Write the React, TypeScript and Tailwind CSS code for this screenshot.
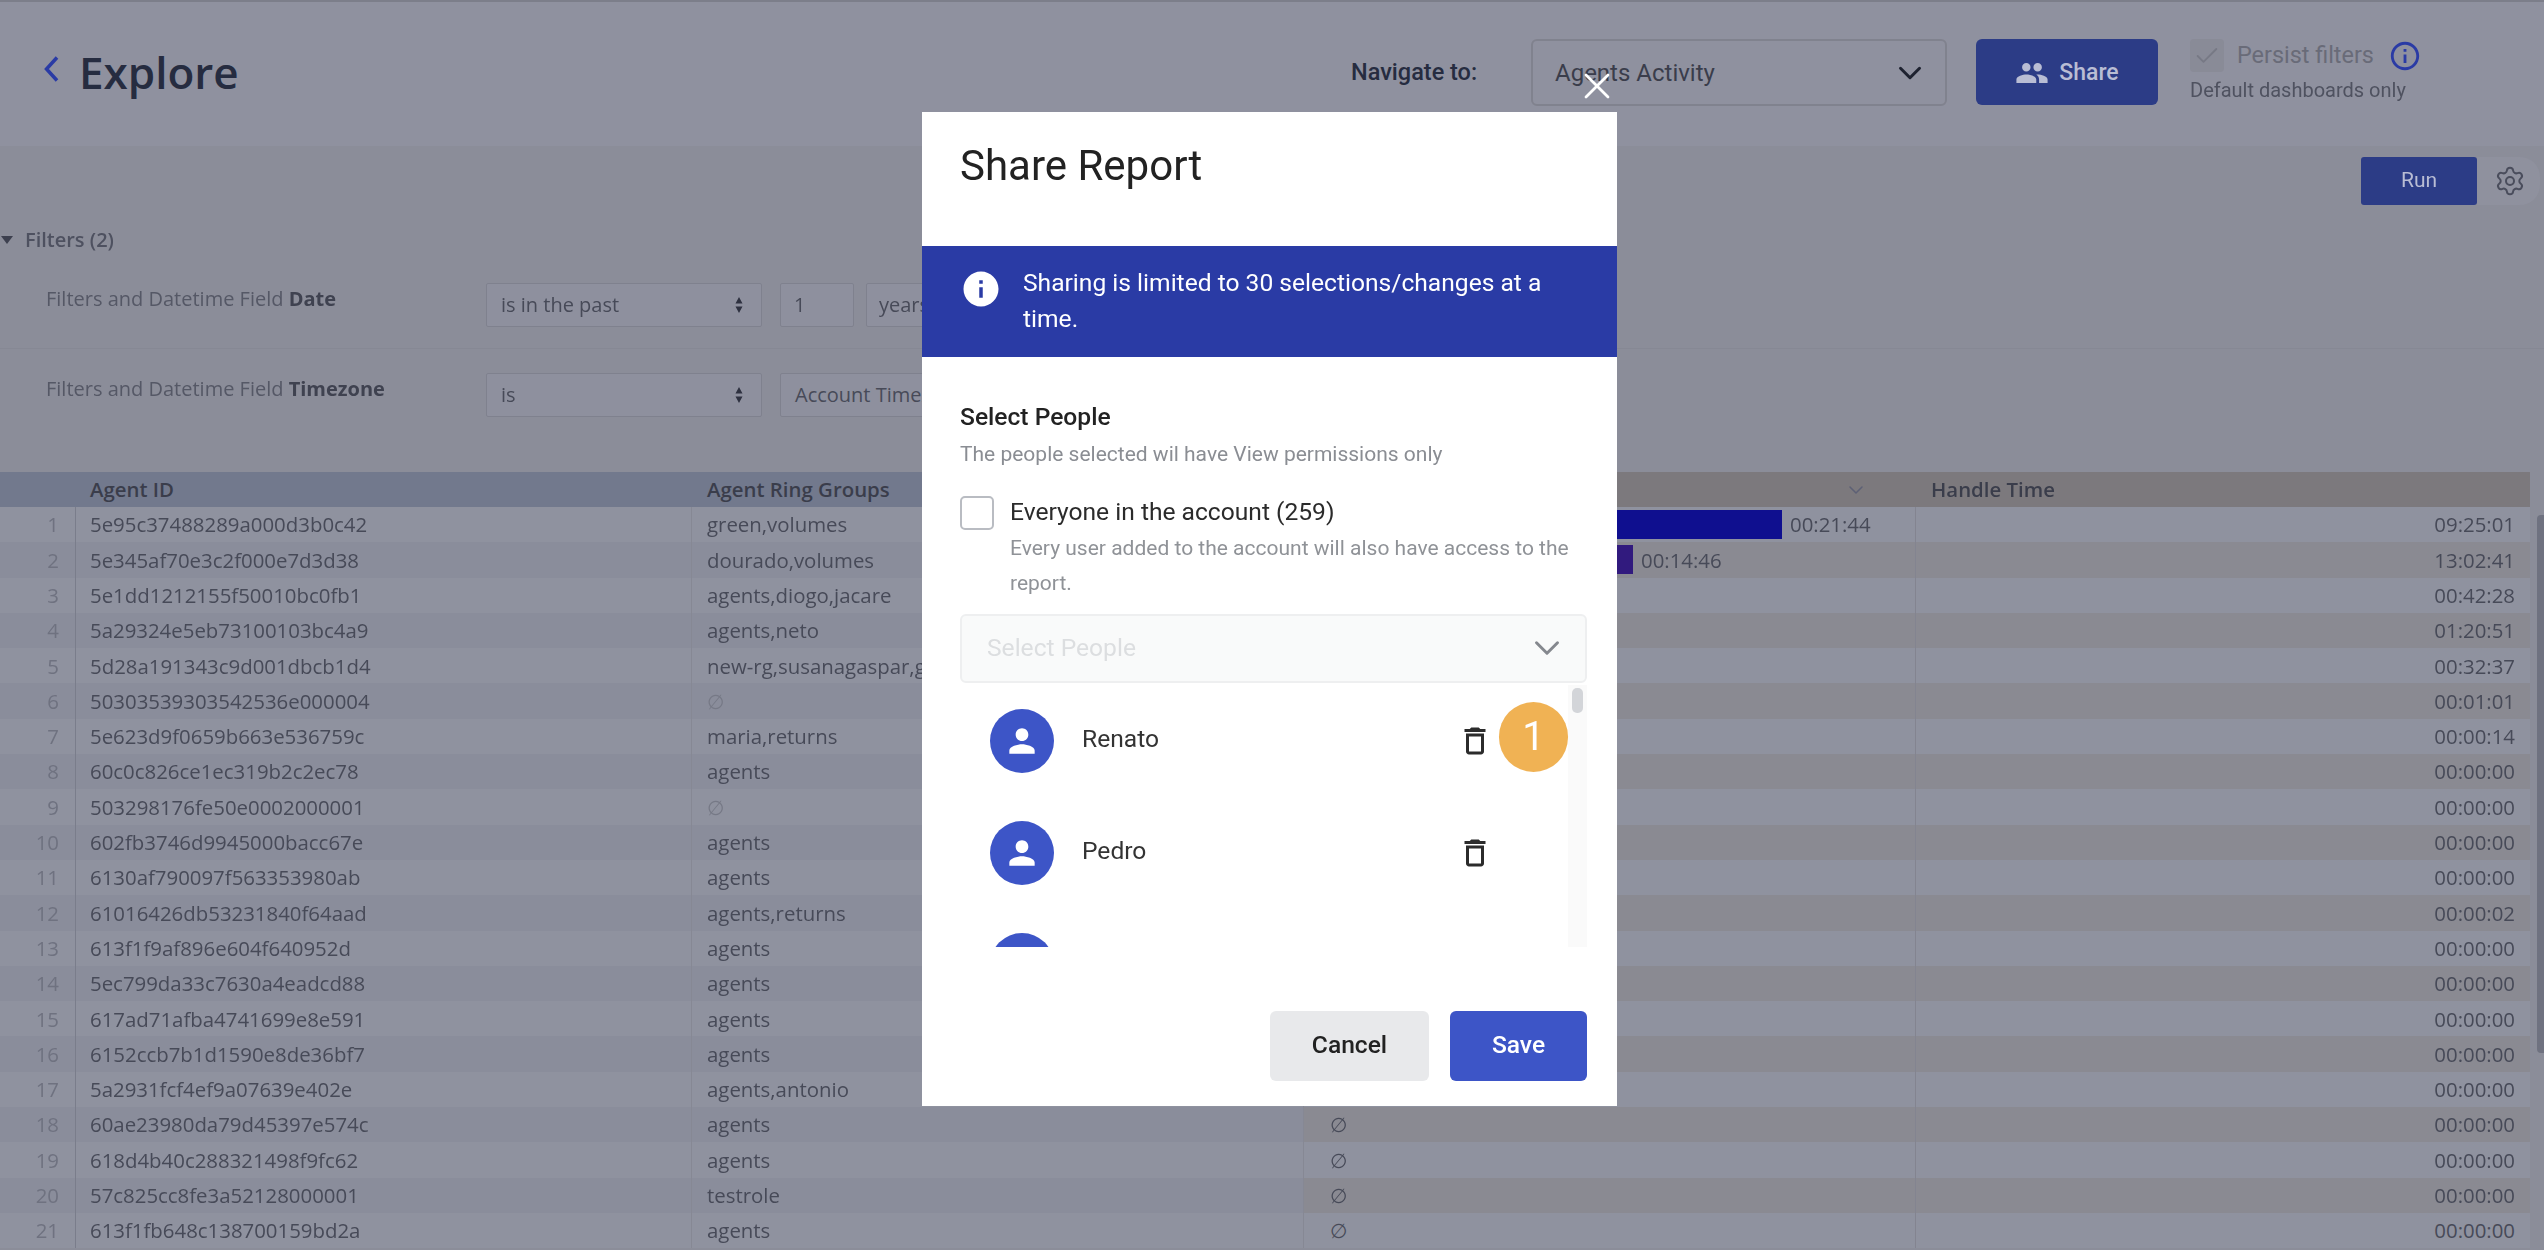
import { Check, ChevronDown, Settings, X } from "lucide-react";
import { MdDeleteOutline, MdInfo, MdInfoOutline, MdPeople, MdPerson } from "react-icons/md";

const rows = [
  ["5e95c37488289a000d3b0c42", "green,volumes", "09:25:01"],
  ["5e345af70e3c2f000e7d3d38", "dourado,volumes", "13:02:41"],
  ["5e1dd1212155f50010bc0fb1", "agents,diogo,jacare", "00:42:28"],
  ["5a29324e5eb73100103bc4a9", "agents,neto", "01:20:51"],
  ["5d28a191343c9d001dbcb1d4", "new-rg,susanagaspar,green", "00:32:37"],
  ["50303539303542536e000004", "∅", "00:01:01"],
  ["5e623d9f0659b663e536759c", "maria,returns", "00:00:14"],
  ["60c0c826ce1ec319b2c2ec78", "agents", "00:00:00"],
  ["503298176fe50e0002000001", "∅", "00:00:00"],
  ["602fb3746d9945000bacc67e", "agents", "00:00:00"],
  ["6130af790097f563353980ab", "agents", "00:00:00"],
  ["61016426db53231840f64aad", "agents,returns", "00:00:02"],
  ["613f1f9af896e604f640952d", "agents", "00:00:00"],
  ["5ec799da33c7630a4eadcd88", "agents", "00:00:00"],
  ["617ad71afba4741699e8e591", "agents", "00:00:00"],
  ["6152ccb7b1d1590e8de36bf7", "agents", "00:00:00"],
  ["5a2931fcf4ef9a07639e402e", "agents,antonio", "00:00:00"],
  ["60ae23980da79d45397e574c", "agents", "00:00:00"],
  ["618d4b40c288321498f9fc62", "agents", "00:00:00"],
  ["57c825cc8fe3a52128000001", "testrole", "00:00:00"],
  ["613f1fb648c138700159bd2a", "agents", "00:00:00"],
];

const FilterSelect = ({ label }: { label: string }) => (
  <div className="flex h-[44px] w-[276px] items-center justify-between rounded-[2px] border border-[#7f818e] bg-[#8e909e] pl-[14px] pr-[18px] text-[20px] text-[#474a58]">
    <span>{label}</span>
    <svg viewBox="0 0 8 16" className="h-[16px] w-[8px] fill-[#2e3140]">
      <path d="M4 0l3.5 6.5h-7zM4 16l3.5-6.5h-7z" />
    </svg>
  </div>
);

const Person = ({ name }: { name: string }) => (
  <div className="flex h-[112px] shrink-0 items-center pl-[30px] pr-[75px]">
    <div className="flex h-[64px] w-[64px] items-center justify-center rounded-full bg-[#3d55c7]">
      <MdPerson className="h-[38px] w-[38px] text-white" />
    </div>
    <span className="mb-[3px] ml-[28px] flex-1 text-[24.6px] leading-[28px] text-[#333]">{name}</span>
    <MdDeleteOutline className="h-[36px] w-[36px] text-[#2b2b2b]" />
  </div>
);

const App = () => {
  return (
    <div className="relative h-[1250px] w-[2544px] overflow-hidden bg-[#8b8d99] font-['Open_Sans',sans-serif]">
      <div className="h-[1250px] blur-[0.6px]">
        <header className="flex h-[146px] items-start justify-between border-t-2 border-[#7c7e8a] bg-[#8f919f] pr-[114px] pt-[37px]">
          <div className="flex items-start">
            <svg viewBox="0 0 17 26" className="ml-[43px] mt-[17px] h-[26px] w-[17px] fill-none stroke-[#2a3ba5] stroke-[3.5]">
              <path d="M14 1.5L3.5 13L14 24.5" />
            </svg>
            <h1 className="ml-[19px] text-[44px] font-semibold leading-[66px] text-[#262c40]">Explore</h1>
          </div>
          <div className="flex items-start font-['Roboto',sans-serif]">
            <span className="flex h-[67px] w-[180px] items-center text-[23.5px] font-medium text-[#262c40]">Navigate to:</span>
            <div className="flex h-[67px] w-[416px] items-center justify-between rounded-[6px] border-2 border-[#80828e] pl-[22px] pr-[16px] text-[24px] text-[#3a3d4b]">
              <span>Agents Activity</span>
              <ChevronDown className="h-[38px] w-[38px] text-[#1e2230]" strokeWidth={1.9} />
            </div>
            <button className="ml-[29px] flex h-[66px] w-[182px] items-center justify-center gap-[10px] rounded-[6px] bg-[#2c3c86] pt-[2px] text-[23px] font-medium text-[#b9bdd4]">
              <MdPeople className="h-[34px] w-[34px]" />
              Share
            </button>
            <div className="ml-[32px] w-[240px]">
              <div className="flex h-[33px] items-center">
                <div className="flex h-[33px] w-[34px] items-center justify-center rounded-[4px] bg-[#898b97]">
                  <Check className="h-[28px] w-[28px] text-[#777985]" strokeWidth={1.6} />
                </div>
                <span className="ml-[13px] text-[23.4px] text-[#696b78]">Persist filters</span>
                <MdInfoOutline className="ml-[14px] h-[34px] w-[34px] text-[#2a3ba5]" />
              </div>
              <p className="mt-[3px] text-[20px] leading-[30px] text-[#4f5260]">Default dashboards only</p>
            </div>
          </div>
        </header>

        <div className="flex h-[81px] items-start justify-end pt-[11px]">
          <button className="h-[48px] w-[116px] rounded-[3px] bg-[#2c3c86] font-['Roboto',sans-serif] text-[21px] text-[#b9bdd4]">Run</button>
          <div className="mr-[4px] flex h-[48px] w-[63px] items-center rounded-r-[20px] bg-[#8f919e] pl-[17px]">
            <Settings className="h-[32px] w-[32px] text-[#4a4d5c]" strokeWidth={1.5} />
          </div>
        </div>

        <div className="flex h-[26px] items-center text-[20px] font-semibold text-[#4e5160]">
          <span className="ml-px h-0 w-0 border-x-[6px] border-t-[8px] border-x-transparent border-t-[#3d404f]" />
          <span className="ml-[12px]">Filters (2)</span>
        </div>

        <section className="text-[20px] text-[#555866]">
          <div className="flex h-[96px] border-b border-[#868894] pl-[46px] pt-[30px]">
            <span className="mt-[1px] w-[440px]">
              Filters and Datetime Field <b className="font-bold text-[#3f4250]">Date</b>
            </span>
            <FilterSelect label="is in the past" />
            <div className="ml-[18px] flex h-[44px] w-[74px] items-center rounded-[2px] border border-[#7f818e] bg-[#8e909e] pl-[13px] text-[20px] text-[#474a58]">1</div>
            <div className="ml-[12px] flex h-[44px] w-[200px] items-center rounded-[2px] border border-[#7f818e] bg-[#8e909e] pl-[12px] text-[20px] text-[#474a58]">years</div>
          </div>
          <div className="flex h-[68px] pl-[46px] pt-[24px]">
            <span className="mt-[1px] w-[440px]">
              Filters and Datetime Field <b className="font-bold text-[#3f4250]">Timezone</b>
            </span>
            <FilterSelect label="is" />
            <div className="ml-[18px] flex h-[44px] w-[300px] items-center rounded-[2px] border border-[#7f818e] bg-[#8e909e] pl-[14px] text-[20px] text-[#474a58]">Account Timezone</div>
          </div>
        </section>

        <div className="mt-[55px] w-[2530px] text-[20.4px] text-[#474a58]">
          <div className="flex h-[35px] items-center font-semibold text-[#3a3d4b]">
            <div className="h-full w-[76px] bg-[#72798d]" />
            <div className="flex h-full w-[616px] items-center bg-[#72798d] pl-[14px]">Agent ID</div>
            <div className="flex h-full w-[612px] items-center bg-[#72798d] pl-[15px]">Agent Ring Groups</div>
            <div className="flex h-full w-[612px] items-center justify-end bg-[#7c797d] pr-[48px]">
              <ChevronDown className="h-[24px] w-[24px] text-[#5d6075]" strokeWidth={1.5} />
            </div>
            <div className="flex h-full flex-1 items-center bg-[#7c797d] pl-[15px]">Handle Time</div>
          </div>
          {rows.map((row, i) => {
            const even = i % 2 === 1;
            const blueCell = even ? "bg-[#8a8d9b]" : "bg-[#8f929f]";
            const brownCell = even ? "bg-[#8a8a92]" : "bg-[#8f929f]";
            return (
              <div key={row[0]} className="flex h-[35.3px] items-stretch">
                <div className={`flex w-[76px] items-center justify-end border-r border-[#7a7d8b] pr-[16px] text-[#6f7280] ${blueCell}`}>{i + 1}</div>
                <div className={`flex w-[616px] items-center border-r border-[#868894] pl-[14px] ${blueCell}`}>{row[0]}</div>
                <div className={`flex w-[612px] items-center overflow-hidden whitespace-nowrap border-r border-[#868894] pl-[15px] ${blueCell}`}>
                  {row[1] === "∅" ? <span className="text-[#767986]">∅</span> : row[1]}
                </div>
                <div className={`flex w-[612px] items-center border-r border-[#838490] pl-[26px] ${brownCell}`}>
                  {i === 0 && (
                    <>
                      <div className="-ml-[26px] h-[29px] w-[478px] bg-[#0f0f8f]" />
                      <span className="ml-[8px]">00:21:44</span>
                    </>
                  )}
                  {i === 1 && (
                    <>
                      <div className="-ml-[26px] h-[29px] w-[329px] bg-[#311a7e]" />
                      <span className="ml-[8px]">00:14:46</span>
                    </>
                  )}
                  {i >= 17 && "∅"}
                </div>
                <div className={`flex flex-1 items-center justify-end pr-[15px] ${brownCell}`}>{row[2]}</div>
              </div>
            );
          })}
        </div>
      </div>

      <div className="absolute right-0 top-[515px] h-[538px] w-[7px] rounded-l-[4px] bg-[#6f7280]" />
      <X className="absolute left-[1575px] top-[64px] z-10 h-[44px] w-[44px] text-white" strokeWidth={1.5} />

      <div className="absolute left-[922px] top-[112px] flex h-[994px] w-[695px] flex-col bg-white font-['Roboto',sans-serif] blur-[0.3px]">
        <h2 className="h-[134px] pl-[38px] pt-[29px] text-[42px] leading-[50px] text-[#222]">Share Report</h2>
        <div className="flex h-[111px] items-start bg-[#2a3ba5] pl-[38px] pr-[50px] pt-[19px] text-[24.6px] leading-[36px] text-white">
          <MdInfo className="mt-[3px] h-[42px] w-[42px] shrink-0" />
          <p className="ml-[21px]">Sharing is limited to 30 selections/changes at a time.</p>
        </div>
        <div className="flex flex-1 flex-col pl-[38px] pr-[30px] pt-[44px]">
          <h3 className="text-[24.6px] font-medium leading-[32px] text-[#222]">Select People</h3>
          <p className="mt-[7px] text-[21px] leading-[28px] text-[#8a8d93]">The people selected wil have View permissions only</p>
          <div className="mt-[28px] flex">
            <div className="h-[34px] w-[34px] shrink-0 rounded-[5px] border-2 border-[#b9bcc2]" />
            <div className="ml-[16px]">
              <p className="text-[24.6px] leading-[32px] text-[#2b2b2b]">Everyone in the account (259)</p>
              <p className="mt-[2.5px] text-[21px] leading-[35px] text-[#8f9297]">Every user added to the account will also have access to the report.</p>
            </div>
          </div>
          <div className="mt-[13px] flex h-[69px] items-center justify-between rounded-[6px] border-2 border-[#eeeff0] bg-[#f9fafa] pl-[25px] pr-[17px] text-[24.6px] text-[#dcdee0]">
            <span>Select People</span>
            <ChevronDown className="h-[42px] w-[42px] text-[#85888e]" strokeWidth={1.7} />
          </div>
          <div className="relative mt-[2px] flex h-[262px] overflow-hidden">
            <div className="flex-1">
              <Person name="Renato" />
              <Person name="Pedro" />
              <Person name="" />
            </div>
            <div className="w-[19px] bg-[#fafafa] px-[4px] pt-[3px]">
              <div className="h-[25px] rounded-[5px] bg-[#d3d5d9]" />
            </div>
            <div className="absolute left-[539px] top-[17px] flex h-[70px] w-[69px] items-center justify-center rounded-full bg-[#f0b254] text-[40px] font-normal text-white">1</div>
          </div>
          <div className="mt-[64px] flex justify-end gap-[21px] text-[24.6px] font-medium">
            <button className="h-[70px] w-[159px] rounded-[6px] bg-[#e8e9eb] text-[#222]">Cancel</button>
            <button className="h-[70px] w-[137px] rounded-[6px] bg-[#3d55c7] text-white">Save</button>
          </div>
        </div>
      </div>
    </div>
  );
};

export default App;
